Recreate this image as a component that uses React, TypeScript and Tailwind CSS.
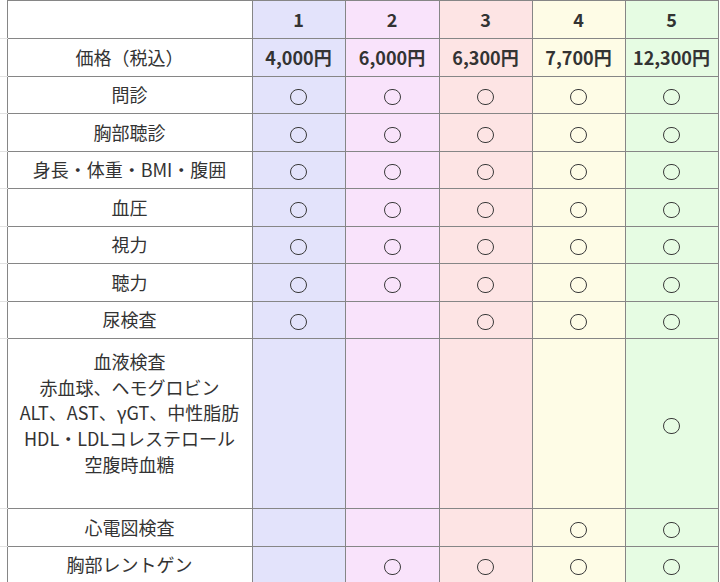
import React from "react";

const cols = ["bg-[#e3e3fb]", "bg-[#f9e3fb]", "bg-[#fde4e4]", "bg-[#fefce6]", "bg-[#e6fce3]"];

type Row = { label: React.ReactNode; marks: boolean[]; tall?: boolean };

const rows: Row[] = [
  { label: "問診", marks: [true, true, true, true, true] },
  { label: "胸部聴診", marks: [true, true, true, true, true] },
  { label: "身長・体重・BMI・腹囲", marks: [true, true, true, true, true] },
  { label: "血圧", marks: [true, true, true, true, true] },
  { label: "視力", marks: [true, true, true, true, true] },
  { label: "聴力", marks: [true, true, true, true, true] },
  { label: "尿検査", marks: [true, false, true, true, true] },
  {
    label: (
      <>
        血液検査
        <br />
        赤血球、ヘモグロビン
        <br />
        ALT、AST、γGT、中性脂肪
        <br />
        HDL・LDLコレステロール
        <br />
        空腹時血糖
      </>
    ),
    marks: [false, false, false, false, true],
    tall: true,
  },
  { label: "心電図検査", marks: [false, false, false, true, true] },
  { label: "胸部レントゲン", marks: [false, true, true, true, true] },
];

const prices = ["4,000円", "6,000円", "6,300円", "7,700円", "12,300円"];

const cell = "border border-[#868686] text-center align-middle p-0";
const edge = "border-b border-b-[#e2e2e2] p-0 w-[7px]";

function Mark() {
  return (
    <span
      aria-label="○"
      className="inline-block w-[17px] h-[16px] rounded-full border-[1.5px] border-[#3a3a3a] align-middle"
    />
  );
}

export default function App() {
  return (
    <div
      className="w-[720px] h-[582px] overflow-hidden bg-white text-[#333] text-[18px]"
      style={{ fontFamily: '"Noto Sans CJK JP", "Noto Sans", sans-serif' }}
    >
      <table className="border-collapse table-fixed w-[718px]">
        <colgroup>
          <col className="w-[7px]" />
          <col className="w-[245px]" />
          <col className="w-[93px]" />
          <col className="w-[94px]" />
          <col className="w-[93px]" />
          <col className="w-[93px]" />
          <col className="w-[93px]" />
        </colgroup>
        <tbody>
          <tr className="h-[38px]">
            <td className={edge} />
            <td className={cell} />
            {[1, 2, 3, 4, 5].map((n, i) => (
              <td key={n} className={`${cell} ${cols[i]} font-bold`}>
                {n}
              </td>
            ))}
          </tr>
          <tr className="h-[37.5px]">
            <td className={edge} />
            <td className={cell}>価格（税込）</td>
            {prices.map((p, i) => (
              <td key={p} className={`${cell} ${cols[i]} font-bold`}>
                {p}
              </td>
            ))}
          </tr>
          {rows.map((r, ri) => (
            <tr key={ri} className={r.tall ? "h-[170px]" : "h-[37.5px]"}>
              <td className={edge} />
              <td className={cell + (r.tall ? " !align-top pt-[10px] leading-[25.7px]" : "")}>{r.label}</td>
              {r.marks.map((m, i) => (
                <td key={i} className={`${cell} ${cols[i]}`}>
                  {m ? <Mark /> : null}
                </td>
              ))}
            </tr>
          ))}
        </tbody>
      </table>
    </div>
  );
}
